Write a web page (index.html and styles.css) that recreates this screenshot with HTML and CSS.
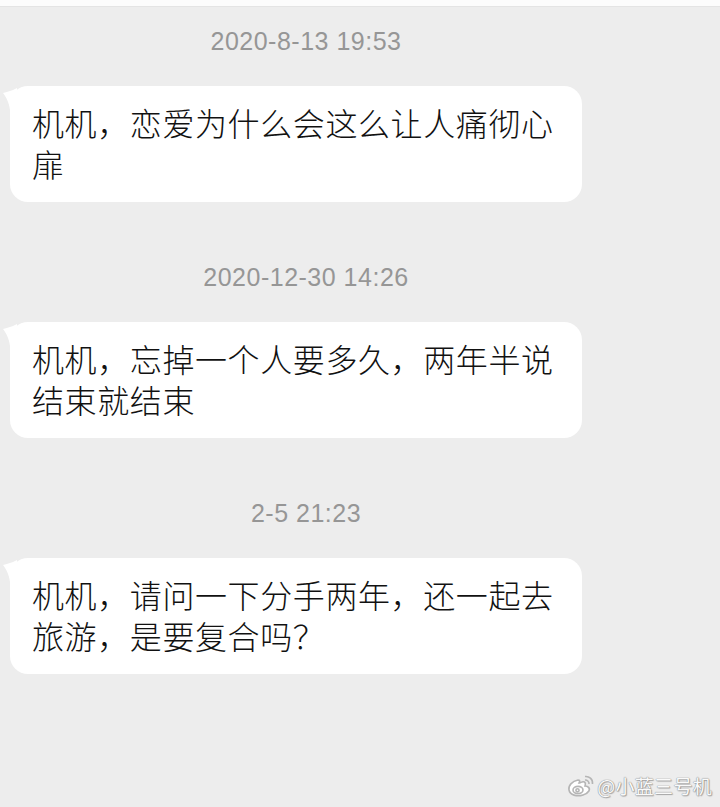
FILE: index.html
```html
<!DOCTYPE html>
<html lang="zh-CN">
<head>
<meta charset="utf-8">
<link rel="stylesheet" href="styles.css">
</head>
<body>
<div class="topbar"></div>
<main class="chat">
  <section class="group">
    <div class="time">2020-8-13 19:53</div>
    <div class="bubble">
      <svg class="tail" width="14" height="22" viewBox="0 0 14 22"><path d="M14 0 L10 2 C7 3 4 4 0 5 C3 9 6 14 7 22 L14 22 Z" fill="#fff"/></svg>
      机机，恋爱为什么会这么让人痛彻心扉
    </div>
  </section>
  <section class="group">
    <div class="time">2020-12-30 14:26</div>
    <div class="bubble">
      <svg class="tail" width="14" height="22" viewBox="0 0 14 22"><path d="M14 0 L10 2 C7 3 4 4 0 5 C3 9 6 14 7 22 L14 22 Z" fill="#fff"/></svg>
      机机，忘掉一个人要多久，两年半说结束就结束
    </div>
  </section>
  <section class="group">
    <div class="time">2-5 21:23</div>
    <div class="bubble">
      <svg class="tail" width="14" height="22" viewBox="0 0 14 22"><path d="M14 0 L10 2 C7 3 4 4 0 5 C3 9 6 14 7 22 L14 22 Z" fill="#fff"/></svg>
      机机，请问一下分手两年，还一起去旅游，是要复合吗？
    </div>
  </section>
</main>
<div class="watermark">
  <svg class="wb" width="28" height="24" viewBox="0 0 28 24">
    <g fill="none" stroke="#b5b5b5" stroke-width="1.6">
      <path d="M11 6 C5 7 1 12 2 16 C3 21 10 23 16 21 C22 19 24 15 21 13 C20 12 19 12 18 12 C19 9 18 7 15 8 C14 8 13 9 12 9 C13 7 13 6 11 6 Z" fill="#fff"/>
      <ellipse cx="11" cy="16" rx="5" ry="3.6" fill="#fff"/>
      <circle cx="10.5" cy="16.3" r="1.6"/>
      <path d="M18 2.5 C22 2 26 5 25.5 10"/>
      <path d="M18 6 C20 5.8 22.3 7.5 22 10"/>
    </g>
  </svg>
  <span class="wm-text">@小蓝三号机</span>
</div>
</body>
</html>
```
FILE: styles.css
```css
html, body {
  margin: 0;
  padding: 0;
}
body {
  background: #ededed;
  width: 720px;
  height: 807px;
  overflow: hidden;
  position: relative;
  font-family: "Noto Sans CJK SC", "Noto Sans", sans-serif;
}
.topbar {
  height: 6px;
  background: #fcfcfc;
  border-bottom: 1px solid #e4e4e4;
}
.chat {
  width: 612px;
  padding-top: 19px;
  display: flex;
  flex-direction: column;
  gap: 60px;
}
.group {
  display: flex;
  flex-direction: column;
  gap: 30px;
}
.time {
  text-align: center;
  font-family: "Liberation Sans", Arial, sans-serif;
  font-size: 25px;
  letter-spacing: 0.5px;
  line-height: 30px;
  height: 30px;
  color: #969696;
}
.bubble {
  position: relative;
  margin-left: 10px;
  width: 530px;
  padding: 16px 20px 18px 22px;
  background: #fff;
  border-radius: 18px;
  font-size: 32px;
  font-weight: 300;
  letter-spacing: 0.6px;
  line-height: 41px;
  color: #111;
}
.tail {
  position: absolute;
  left: -7px;
  top: 2px;
}
.watermark {
  position: absolute;
  right: 8px;
  bottom: 9px;
  display: flex;
  align-items: center;
  gap: 2px;
}
.wm-text {
  font-family: "Noto Sans CJK SC", sans-serif;
  font-size: 19px;
  letter-spacing: 0.3px;
  line-height: 24px;
  color: #fafafa;
  text-shadow: 0 0 1px #8a8a8a, 0 0 1px #8a8a8a, 1px 1px 1px #aaa;
}
```
